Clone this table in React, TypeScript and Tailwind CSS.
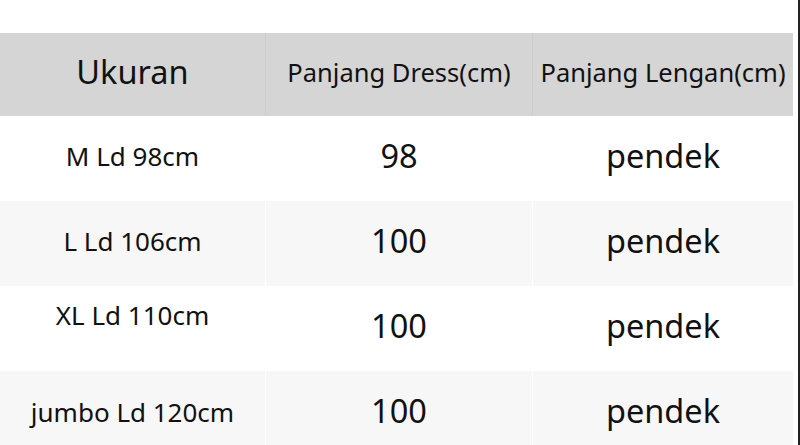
const rows = [
    { size: 'M Ld 98cm', dress: '98', sleeve: 'pendek', shade: false, sizePad: 'pb-[4px]' },
    { size: 'L Ld 106cm', dress: '100', sleeve: 'pendek', shade: true, sizePad: 'pb-[4px]' },
    { size: 'XL Ld 110cm', dress: '100', sleeve: 'pendek', shade: false, sizePad: 'pb-[26px]' },
    { size: 'jumbo Ld 120cm', dress: '100', sleeve: 'pendek', shade: true, sizePad: 'pb-[2px]' },
];

export default function App() {
    return (
        <div
            className="flex h-[445px] w-[800px] overflow-hidden bg-white text-[#111]"
            style={{ fontFamily: '"Noto Sans", "Open Sans", sans-serif' }}
        >
            <div className="w-[793px] pt-[33px]">
                {/* Header */}
                <div className="grid h-[83px] grid-cols-[266px_267px_260px] bg-[#d5d5d5]">
                    <div className="flex items-center justify-center border-r border-[#cdcdcd] pb-[4px] text-[32.5px]">
                        Ukuran
                    </div>
                    <div className="flex items-center justify-center border-r border-[#cdcdcd] pb-[4px] text-[25.5px]">
                        Panjang Dress(cm)
                    </div>
                    <div className="flex items-center justify-center whitespace-nowrap pb-[4px] text-[25.5px]">
                        Panjang Lengan(cm)
                    </div>
                </div>

                {/* Rows */}
                {rows.map((row) => (
                    <div
                        key={row.size}
                        className={`grid h-[85px] grid-cols-[266px_267px_260px] ${row.shade ? 'bg-[#f7f7f7]' : 'bg-white'}`}
                    >
                        <div
                            className={`flex items-center justify-center border-r border-white text-[26px] ${row.sizePad}`}
                        >
                            {row.size}
                        </div>
                        <div className="flex items-center justify-center border-r border-white pb-[4px] text-[32.5px]">
                            {row.dress}
                        </div>
                        <div className="flex items-center justify-center pb-[4px] text-[32.5px]">
                            {row.sleeve}
                        </div>
                    </div>
                ))}
            </div>
            <div className="w-[5px]" />
            <div className="h-full w-[2px] bg-[#222]" />
        </div>
    );
}
